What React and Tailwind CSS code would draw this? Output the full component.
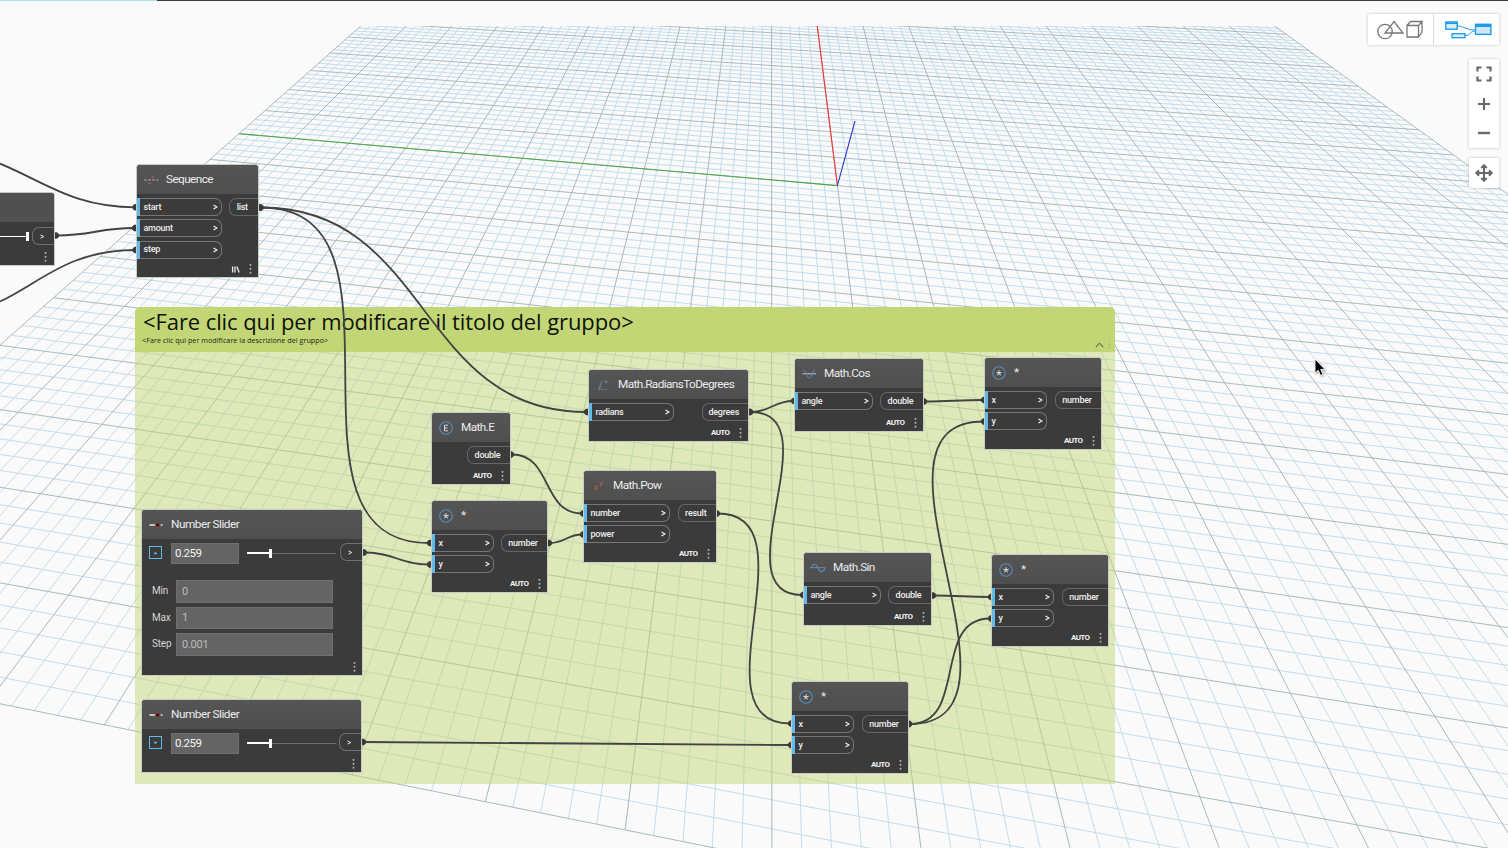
import React from "react";

/* ---------- perspective ground grid ---------- */

const project = (u, v) => {
  const w = 1 + 0.057416 * u + 0.01114 * v;
  return [
    ((837.4 + 44.293 * u - 57.18 * v) / w).toFixed(2),
    ((185.6 - 19.37 * u - 3.7006 * v) / w).toFixed(2),
  ];
};

const segment = (u1, v1, u2, v2) => {
  const [x1, y1] = project(u1, v1);
  const [x2, y2] = project(u2, v2);
  return `M${x1} ${y1}L${x2} ${y2}`;
};

const steps = Array.from({ length: 101 }, (_, i) => i - 50);
const linesFor = (list) =>
  list
    .map((i) => segment(-10, i / 5, 10, i / 5) + segment(i / 5, -10, i / 5, 10))
    .join("");
const MINOR = linesFor(steps.filter((i) => i % 5 !== 0));
const MAJOR = linesFor(steps.filter((i) => i % 5 === 0));

function Ground() {
  return (
    <svg className="absolute inset-0" width="1508" height="848" fill="none">
      <defs>
        <clipPath id="view">
          <rect x="0" y="26" width="1508" height="822" />
        </clipPath>
      </defs>
      <g clipPath="url(#view)">
        <path d={MINOR} stroke="#c1dae9" strokeWidth="0.95" />
        <path d={MAJOR} stroke="#a5b6bd" strokeWidth="0.95" />
        <path d={segment(0, 0, 0, 10)} stroke="#4aa84a" strokeWidth="1.1" />
        <path d={segment(0, 0, 10, 0)} stroke="#f83030" strokeWidth="1.1" />
        <path d="M837.4 185.6L855 121" stroke="#3038c8" strokeWidth="1.1" />
      </g>
    </svg>
  );
}

/* ---------- wires ---------- */

const WIRES = [
  [261.5, 207.5, 586, 412],
  [261.5, 207.5, 429, 543],
  [365, 552.5, 429, 564.5],
  [364, 742, 790, 745],
  [512, 454.5, 582, 513.5],
  [550, 543, 582, 534.5],
  [751, 412, 793, 401],
  [751, 412, 802, 595],
  [718, 513.5, 790, 723.5],
  [925, 401.5, 983, 400],
  [934, 595.5, 990, 597],
  [910, 724, 983, 421.5],
  [910, 724, 990, 618.5],
  [57, 235.5, 134, 228],
];

const wirePath = ([x1, y1, x2, y2]) => {
  const o = 0.44 * Math.hypot(x2 - x1, y2 - y1);
  return `M${x1 - 2} ${y1}L${x1} ${y1}C${x1 + o} ${y1} ${x2 - o} ${y2} ${x2} ${y2}L${x2 + 2} ${y2}`;
};

const plug = (x, y) => `M${x - 2.5} ${y - 3.2}h2.4l2 1.6v3.2l-2 1.6h-2.4z`;
const socket = (x, y) => `M${x + 2.5} ${y - 3.2}h-2.4l-2 1.6v3.2l2 1.6h2.4z`;

function Wires() {
  return (
    <svg className="absolute inset-0" width="1508" height="848" fill="none">
      <g stroke="#434343" strokeWidth="1.8">
        {WIRES.map((w, i) => (
          <path key={i} d={wirePath(w)} />
        ))}
        <path d="M0 163.7C45 182 73 207.3 136 207.3" />
        <path d="M0 301.5C40 283 68 250 136 250" />
      </g>
      <g fill="#3a3a3a">
        {WIRES.map(([x1, y1, x2, y2], i) => (
          <path key={i} d={plug(x1, y1) + socket(x2, y2)} />
        ))}
        <path d={socket(134.5, 207.3) + socket(134.5, 250)} />
      </g>
    </svg>
  );
}

/* ---------- header icons ---------- */

const Ring = ({ children }) => (
  <svg width="14" height="14" viewBox="0 0 14 14" fill="none">
    <circle cx="7" cy="7" r="6.3" stroke="#5a8cba" strokeWidth="1.1" />
    {children}
  </svg>
);

const ICONS = {
  mul: (
    <Ring>
      <path d="M7 7V4.2M7 7l2.6-.8M7 7l1.6 2.2M7 7l-1.6 2.2M7 7l-2.6-.8" stroke="#d4d6d8" strokeWidth="1.1" />
    </Ring>
  ),
  e: (
    <Ring>
      <path d="M9 4.2H5.5v5.6H9M5.5 7h3" stroke="#d8d8d8" strokeWidth="1" />
    </Ring>
  ),
  pow: (
    <svg width="14" height="14" viewBox="0 0 14 14" fill="none">
      <path d="M3.6 6.5l3.2 4.6M6.8 6.5l-3.2 4.6M8.6 2.5l1.7 3M12 2.5L9.4 7.6" stroke="#b06052" strokeWidth="1" />
    </svg>
  ),
  angle: (
    <svg width="14" height="14" viewBox="0 0 14 14" fill="none">
      <path d="M2.5 11.5L6 2.5" stroke="#5a8cba" />
      <path d="M2.5 11.6h10" stroke="#5a8cba" strokeDasharray="2 1.2" />
      <path d="M3.6 8.6l2.6 1" stroke="#b06a58" />
      <circle cx="10" cy="4" r="1" stroke="#8f8f8f" strokeWidth="0.8" />
    </svg>
  ),
  seq: (
    <svg width="15" height="14" viewBox="0 0 15 14" fill="none">
      <path d="M0 7h14.5" stroke="#a8a8a8" strokeDasharray="3 1" />
      <path d="M4.5 10.5h2M7.6 4h2.6" stroke="#b86a50" />
    </svg>
  ),
  cos: (
    <svg width="15" height="14" viewBox="0 0 15 14" fill="none">
      <path d="M0.5 6.8h13.5" stroke="#c8ccd0" />
      <path d="M1.5 2.5C4 4 4.6 11 7.2 11S10.5 4 13 2.5" stroke="#5a8cba" />
    </svg>
  ),
  sin: (
    <svg className="-ml-px" width="16" height="14" viewBox="0 0 16 14" fill="none">
      <path d="M0 6.7h15.5" stroke="#7f97a8" strokeWidth="0.8" />
      <path d="M1 7C3 2 6 2 8 7s5 5 7 0" stroke="#5a8cba" strokeWidth="1.1" />
    </svg>
  ),
  slider: (
    <svg width="14" height="14" viewBox="0 0 14 14" fill="none">
      <path d="M0.5 7h5.5M11.5 7h2" stroke="#e8e8e8" strokeWidth="1.4" />
      <circle cx="8.8" cy="7" r="2.2" fill="#2a1d1a" stroke="#93493a" strokeWidth="1" />
    </svg>
  ),
};

/* ---------- node building blocks ---------- */

const Dots = () => (
  <svg width="3" height="10" viewBox="0 0 3 10" fill="#b8b8b8">
    <rect x="0.7" y="0" width="1.6" height="1.8" />
    <rect x="0.7" y="3.9" width="1.6" height="1.8" />
    <rect x="0.7" y="7.8" width="1.6" height="1.8" />
  </svg>
);

const Chevron = ({ className }) => (
  <svg className={className} width="5" height="6" viewBox="0 0 5 6" fill="none">
    <path d="M0.5 1L4 3L0.5 5" stroke="#f0f0f0" strokeWidth="1.2" />
  </svg>
);

function Header({ icon, title }) {
  return (
    <div className="flex h-[29px] shrink-0 items-center bg-gradient-to-b from-[#555555] to-[#4f4f4f] pl-[7px]">
      <span className="flex w-[22px] shrink-0 items-center">{ICONS[icon]}</span>
      <span className="whitespace-nowrap pt-px text-[11.8px] leading-none tracking-[-0.6px] text-[#ececec]">{title}</span>
    </div>
  );
}

function Frame({ x, y, w, h, children }) {
  return (
    <div
      className="absolute flex flex-col overflow-hidden rounded-t-[4px] border border-[#c9ccc4] bg-[#3b3b3b]"
      style={{ left: x, top: y, width: w, height: h }}
    >
      {children}
    </div>
  );
}

const InPort = ({ label, width }) => (
  <div
    className="flex h-[18px] items-center rounded-r-[7px] border border-l-0 border-[#767676]"
    style={{ width }}
  >
    <span className="h-[18px] w-[3px] shrink-0 bg-[#62b9ea]" />
    <span className="ml-[3.5px] flex-1 whitespace-nowrap text-[9px] font-medium leading-none tracking-[-0.25px] text-[#ececec]">
      {label}
    </span>
    <Chevron className="mr-[3px]" />
  </div>
);

const OutPort = ({ label, width }) => (
  <div
    className="flex h-[18px] items-center justify-center rounded-l-[7px] border border-r-0 border-[#666666] pr-[3px] text-[9px] font-medium leading-none tracking-[-0.25px] text-[#ececec]"
    style={{ width }}
  >
    {label}
  </div>
);

const Lacing = () => (
  <svg width="9" height="7" viewBox="0 0 9 7" fill="none">
    <path d="M1.6 0.5v6M4 0.5v6M5.8 0.5l2.4 6" stroke="#ececec" strokeWidth="1.3" />
  </svg>
);

function Node({ x, y, w, h, icon, title, ins = [], inW, out, outW, lacing }) {
  return (
    <Frame x={x} y={y} w={w} h={h}>
      <Header icon={icon} title={title} />
      <div className="flex justify-between pt-1">
        <div className="flex flex-col gap-[3.4px]">
          {ins.map((label) => (
            <InPort key={label} label={label} width={inW} />
          ))}
        </div>
        <OutPort label={out} width={outW} />
      </div>
      <div className="mt-auto flex items-center justify-end gap-[9.5px] pb-[3px] pr-[6px]">
        {lacing ? (
          <Lacing />
        ) : (
          <span className="text-[8px] font-bold leading-none tracking-[-0.6px] text-[#f2f2f2]">AUTO</span>
        )}
        <Dots />
      </div>
    </Frame>
  );
}

const Track = () => (
  <div className="ml-2 mt-px flex h-[18px] w-[89px] items-center">
    <span className="h-[1.5px] w-[22px] bg-white" />
    <span className="h-[9px] w-[3px] bg-white" />
    <span className="h-px flex-1 bg-[#6e6e6e]" />
  </div>
);

const ArrowPort = () => (
  <div className="flex h-[18px] w-[22.5px] items-center rounded-l-[7px] border border-r-0 border-[#707070] pl-[7px]">
    <svg width="5" height="5" viewBox="0 0 5 5" fill="none">
      <path d="M0.5 0.9L3.8 2.5L0.5 4.1" stroke="#e4e4e4" />
    </svg>
  </div>
);

const Field = ({ label, value }) => (
  <div className="flex items-center">
    <span className="w-[24px] text-[10px] leading-none tracking-[-0.2px] text-[#d4d4d4]">{label}</span>
    <span className="flex h-[22.5px] w-[157px] items-center border border-[#6f6f6f] bg-[#646464] pl-[5px] text-[11px] leading-none tracking-[-0.25px] text-[#bdbdbd]">
      {value}
    </span>
  </div>
);

function SliderNode({ x, y, h, open }) {
  return (
    <Frame x={x} y={y} w={open ? 222 : 221} h={h}>
      <Header icon="slider" title={<span className="tracking-[-0.5px]">Number Slider</span>} />
      <div className="flex pt-1">
        <span className="ml-[7px] mt-[3px] flex h-[13px] w-[13px] items-center justify-center border border-[#62b9ea]">
          <svg width="5" height="4" viewBox="0 0 5 4" fill="#62b9ea">
            <path d={open ? "M0.5 3.2L2.5 0.8L4.5 3.2z" : "M0.5 0.8L2.5 3.2L4.5 0.8z"} />
          </svg>
        </span>
        <span className="ml-[9px] flex h-[21px] w-[68px] items-center border border-[#6f6f6f] bg-[#646464] pl-[3px] text-[11.5px] leading-none tracking-[-0.5px] text-[#f4f4f4]">
          0.259
        </span>
        <Track />
        <span className="ml-auto">
          <ArrowPort />
        </span>
      </div>
      {open && (
        <div className="flex flex-col gap-1 pl-[10px] pt-4">
          <Field label="Min" value="0" />
          <Field label="Max" value="1" />
          <Field label="Step" value="0.001" />
        </div>
      )}
      <div className="mt-auto flex justify-end pb-[3px] pr-[6px]">
        <Dots />
      </div>
    </Frame>
  );
}

/* ---------- group ---------- */

function Group() {
  return (
    <section className="absolute left-[135px] top-[307px] flex h-[476.5px] w-[980px] flex-col overflow-hidden rounded-t-[5px]">
      <header className="flex h-[44.5px] justify-between bg-[#c2d676] pl-[7px] font-['Open_Sans','Noto_Sans',sans-serif]">
        <div>
          <h1 className="whitespace-nowrap pl-px text-[22px] leading-[29px] tracking-[-0.09px] text-[#10120c]">
            &lt;Fare clic qui per modificare il titolo del gruppo&gt;
          </h1>
          <p className="whitespace-nowrap pt-px text-[7.25px] leading-[7px] text-[#22251b]">
            &lt;Fare clic qui per modificare la descrizione del gruppo&gt;
          </p>
        </div>
        <div className="flex items-center gap-1 self-end pb-[3px] pr-1">
          <svg width="9" height="6" viewBox="0 0 9 6" fill="none">
            <path d="M0.8 5L4.5 1.2L8.2 5" stroke="#6d7a4a" strokeWidth="1.1" />
          </svg>
          <svg width="3" height="8" viewBox="0 0 3 8" fill="#94a55c">
            <rect x="1" y="0.5" width="1" height="1" />
            <rect x="1" y="3.2" width="1" height="1" />
            <rect x="1" y="6" width="1" height="1" />
          </svg>
        </div>
      </header>
      <div className="flex-1 bg-[#c2d676]/50" />
    </section>
  );
}

/* ---------- view controls ---------- */

const panel = "bg-white shadow-[0_0_3px_rgba(0,0,0,0.25)] rounded-[2px]";

function Controls() {
  return (
    <div className="absolute right-[9px] top-[14px] flex flex-col items-end">
      <div className={`flex h-[31px] w-[131px] ${panel}`}>
        <div className="flex w-[65.5px] items-center justify-center border-r border-[#dcdcdc]">
          <svg width="50" height="22" viewBox="0 0 50 22" fill="none" stroke="#7a7676" strokeWidth="1.3">
            <circle cx="10" cy="12.5" r="7.2" />
            <path d="M19 2.5L28 14H10z" />
            <path d="M32 6.5h11.5V18H32zM32 6.5L35.5 2.5H47L43.5 6.5M47 2.5V13L43.5 18" />
          </svg>
        </div>
        <div className="flex flex-1 items-center justify-center pl-1">
          <svg width="48" height="20" viewBox="0 0 48 20" fill="none" stroke="#1f9bee">
            <path d="M13 6C20 6 22 10 31 10M21 15.5C27 15.5 26 11 31 11" strokeWidth="1" />
            <rect x="1.8" y="2" width="11.4" height="7.2" fill="#d7edf3" strokeWidth="1.4" />
            <path d="M1.8 3.2h11.4" strokeWidth="1.6" />
            <rect x="8" y="13.7" width="13" height="4" fill="#d7edf3" strokeWidth="1.3" />
            <rect x="31.5" y="4.3" width="15.4" height="10" fill="#cfe9f2" strokeWidth="1.4" />
            <path d="M31.5 6h15.4" strokeWidth="2" />
          </svg>
        </div>
      </div>
      <div className={`mt-[14px] flex h-[89px] w-[30px] flex-col items-center justify-between pb-2 pt-[7px] ${panel}`}>
        <svg width="16" height="16" viewBox="0 0 16 16" fill="none" stroke="#6b6766" strokeWidth="2.2">
          <path d="M1.5 5.5v-4h4M10.5 1.5h4v4M14.5 10.5v4h-4M5.5 14.5h-4v-4" />
        </svg>
        <svg width="14" height="14" viewBox="0 0 14 14" stroke="#6b6766" strokeWidth="2.2">
          <path d="M7 1v12M1 7h12" />
        </svg>
        <svg width="14" height="14" viewBox="0 0 14 14" stroke="#6b6766" strokeWidth="2.4">
          <path d="M1 7h12" />
        </svg>
      </div>
      <div className={`mt-[10px] flex h-[30px] w-[30px] items-center justify-center ${panel}`}>
        <svg width="18" height="18" viewBox="0 0 18 18" fill="none" stroke="#6b6766" strokeWidth="2">
          <path d="M9 2v14M2 9h14M6.2 4L9 1.3L11.8 4M6.2 14L9 16.7L11.8 14M4 6.2L1.3 9L4 11.8M14 6.2L16.7 9L14 11.8" />
        </svg>
      </div>
    </div>
  );
}

const MUL = { icon: "mul", title: "*", ins: ["x", "y"], inW: 62, out: "number", outW: 46, w: 118, h: 93 };

export default function App() {
  return (
    <main className="relative h-[848px] w-[1508px] overflow-hidden bg-[#fafafa] font-[Roboto,'Liberation_Sans',sans-serif]">
      <Ground />
      <div className="flex h-px">
        <span className="w-[157px] bg-[#a6e3e0]" />
        <span className="flex-1 bg-[#3c3c3c]" />
      </div>
      <Group />
      <Wires />

      <Frame x={-60} y={192} w={115} h={74}>
        <div className="h-[29px] bg-[#505050]" />
        <div className="flex items-center justify-end pt-[5px]">
          <span className="h-px w-[60px] bg-white" />
          <span className="mr-[3px] h-[9px] w-[3px] bg-white" />
          <ArrowPort />
        </div>
        <div className="mt-auto flex justify-end pb-[3px] pr-[7px]">
          <Dots />
        </div>
      </Frame>

      <Node x={136} y={164} w={123} h={114} icon="seq" title="Sequence" ins={["start", "amount", "step"]} inW={85} out="list" outW={29.5} lacing />
      <Node x={431} y={412} w={80} h={73} icon="e" title="Math.E" out="double" outW={43} />
      <Node {...MUL} x={431} y={500} w={117} />
      <Node x={583} y={470} w={134} h={93} icon="pow" title="Math.Pow" ins={["number", "power"]} inW={85.5} out="result" outW={38.5} />
      <Node x={588} y={369} w={161} h={73} icon="angle" title="Math.RadiansToDegrees" ins={["radians"]} inW={84.5} out="degrees" outW={46.5} />
      <Node x={794} y={358} w={130} h={74} icon="cos" title="Math.Cos" ins={["angle"]} inW={78} out="double" outW={43} />
      <Node x={803} y={552} w={129} h={74} icon="sin" title="Math.Sin" ins={["angle"]} inW={77} out="double" outW={43} />
      <Node {...MUL} x={984} y={357} />
      <Node {...MUL} x={991} y={554} />
      <Node {...MUL} x={791} y={681} />
      <SliderNode x={141} y={509} h={167} open />
      <SliderNode x={141} y={699} h={74} />

      <Controls />

      <svg className="absolute left-[1314px] top-[358px] drop-shadow-[1px_1px_1px_rgba(0,0,0,0.3)]" width="12" height="20" viewBox="0 0 12 20">
        <path d="M1 1V15.2L4.2 12.2L6.6 17.6L9 16.5L6.7 11.4H11z" fill="#000" stroke="#fff" strokeWidth="0.9" />
      </svg>
    </main>
  );
}
